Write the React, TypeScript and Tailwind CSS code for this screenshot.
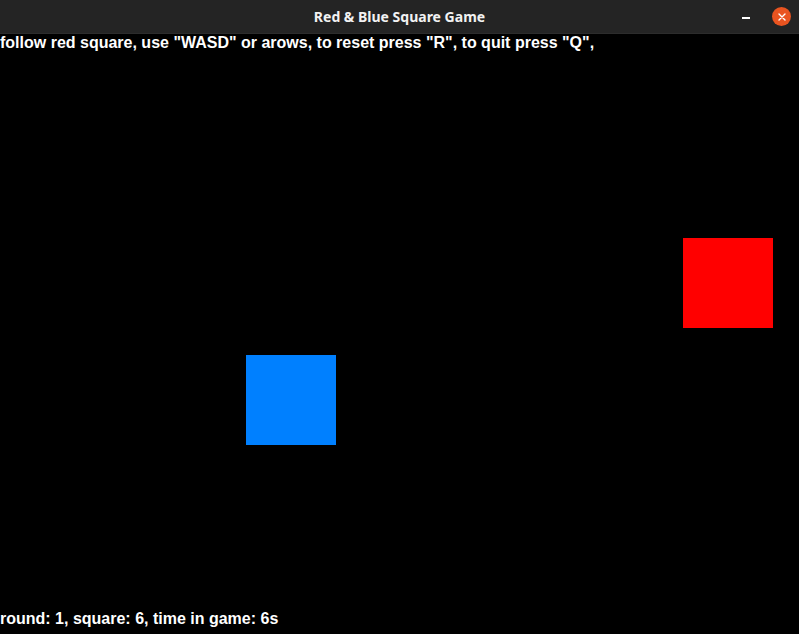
export default function App() {
  return (
    <div className="flex h-[634px] w-[799px] flex-col overflow-hidden bg-black">
      <TitleBar />
      <div className="relative flex flex-1 flex-col justify-between font-['Liberation_Sans',Arial,sans-serif] text-[16px] font-bold leading-[18px] text-white">
        <div>follow red square, use "WASD" or arows, to reset press "R", to quit press "Q",</div>

        {/* squares sit on a free canvas */}
        <div className="absolute left-[683px] top-[204px] h-[90px] w-[90px] bg-[#ff0000]" />
        <div className="absolute left-[246px] top-[321px] h-[90px] w-[90px] bg-[#0080ff]" />

        <div className="pb-[6px]">round: 1, square: 6, time in game: 6s</div>
      </div>
    </div>
  );
}

function TitleBar() {
  return (
    <div className="relative flex h-[34px] shrink-0 items-center justify-center border-b border-[#2c2c2c] bg-[#242424]">
      <span className="font-['Noto_Sans','Open_Sans',sans-serif] text-[14px] font-bold text-[#f2f2f2]">
        Red &amp; Blue Square Game
      </span>
      <div className="absolute right-[8px] top-0 flex h-[33px] items-center gap-[22px]">
        <div className="mt-[3px] h-[1.5px] w-[8px] bg-white" />
        <div className="flex h-[19px] w-[19px] items-center justify-center rounded-full bg-[#e95420]">
          <svg viewBox="0 0 10 10" className="h-[10px] w-[10px]">
            <path d="M2 2 L8 8 M8 2 L2 8" stroke="#fff" strokeWidth="1.4" strokeLinecap="round" />
          </svg>
        </div>
      </div>
    </div>
  );
}
